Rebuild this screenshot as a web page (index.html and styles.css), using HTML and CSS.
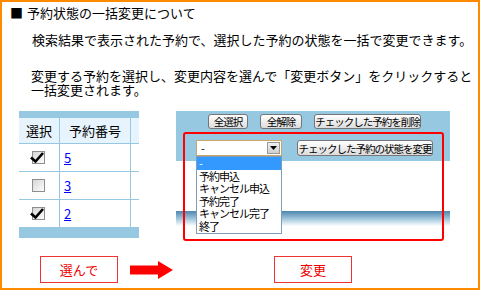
FILE: index.html
```html
<!DOCTYPE html>
<html>

<head>
    <meta charset="utf-8">
    <link rel="stylesheet" href="styles.css">
</head>

<body>
    <div class="frame">
        <h1 class="title"><span class="mark">■</span>予約状態の一括変更について</h1>
        <p class="lead">検索結果で表示された予約で、選択した予約の状態を一括で変更できます。</p>
        <p class="note">変更する予約を選択し、変更内容を選んで「変更ボタン」をクリックすると<br>一括変更されます。</p>

        <div class="demo">
            <div class="rsv-table">
                <div class="bar-top"></div>
                <div class="row head">
                    <div class="cell">選択</div>
                    <div class="cell num">予約番号</div>
                    <div class="cell"></div>
                </div>
                <div class="row">
                    <div class="cell">
                        <svg class="check" width="16" height="14" viewBox="0 0 16 14">
                            <defs>
                                <linearGradient id="cbg" x1="0" y1="0" x2="1" y2="1">
                                    <stop offset="0" stop-color="#d4d4d4"/>
                                    <stop offset="1" stop-color="#ffffff"/>
                                </linearGradient>
                            </defs>
                            <rect x="2.5" y="0.5" width="12" height="12" fill="url(#cbg)" stroke="#8e8e8e"/>
                            <path d="M1 6.5 L5.5 10.5 L13 2" fill="none" stroke="#000" stroke-width="2.6"/>
                        </svg>
                    </div>
                    <div class="cell num"><a href="#">5</a></div>
                    <div class="cell"></div>
                </div>
                <div class="row">
                    <div class="cell">
                        <svg class="check" width="16" height="14" viewBox="0 0 16 14">
                            <rect x="2.5" y="0.5" width="12" height="12" fill="url(#cbg)" stroke="#8e8e8e"/>
                        </svg>
                    </div>
                    <div class="cell num"><a href="#">3</a></div>
                    <div class="cell"></div>
                </div>
                <div class="row last">
                    <div class="cell">
                        <svg class="check" width="16" height="14" viewBox="0 0 16 14">
                            <rect x="2.5" y="0.5" width="12" height="12" fill="url(#cbg)" stroke="#8e8e8e"/>
                            <path d="M1 6.5 L5.5 10.5 L13 2" fill="none" stroke="#000" stroke-width="2.6"/>
                        </svg>
                    </div>
                    <div class="cell num"><a href="#">2</a></div>
                    <div class="cell"></div>
                </div>
                <div class="bar-bottom"></div>
            </div>

            <div class="panel">
                <div class="panel-blue">
                    <div class="btn-row">
                        <button class="btn w-all">全選択</button>
                        <button class="btn w-clear">全解除</button>
                        <button class="btn w-del">チェックした予約を削除</button>
                    </div>
                    <div class="select-row">
                        <div class="select">
                            <span class="select-value">-</span>
                            <span class="select-arrow"><svg width="7" height="4" viewBox="0 0 7 4"><path d="M0 0 H7 L3.5 4 Z" fill="#000"/></svg></span>
                            <ul class="options">
                                <li class="picked">-</li>
                                <li>予約申込</li>
                                <li>キャンセル申込</li>
                                <li>予約完了</li>
                                <li>キャンセル完了</li>
                                <li>終了</li>
                            </ul>
                        </div>
                        <button class="btn w-change">チェックした予約の状態を変更</button>
                    </div>
                </div>
                <div class="panel-white"></div>
                <div class="panel-foot"></div>
                <div class="focus-box"></div>
            </div>
        </div>

        <div class="steps">
            <div class="step">選んで</div>
            <svg class="arrow" width="43" height="18" viewBox="0 0 43 18">
                <path d="M0 4.5 H28 V0 L43 9 L28 18 V13.5 H0 Z" fill="#f00"/>
            </svg>
            <div class="step step-change">変更</div>
        </div>
    </div>
</body>

</html>
```

FILE: styles.css
```css
body {
    margin: 0;
    font-family: "Noto Sans CJK JP", "Liberation Sans", sans-serif;
    color: #000;
}

.frame {
    width: 480px;
    height: 290px;
    box-sizing: border-box;
    border: 2px solid #ff8a00;
    background: #fff;
}

.title {
    margin: 3px 0 0 8px;
    font-size: 13px;
    font-weight: normal;
    line-height: 16px;
}

.mark {
    margin-right: 4px;
}

.lead {
    margin: 11px 0 0 30px;
    font-size: 13px;
    line-height: 16px;
}

.note {
    margin: 21px 0 0 29px;
    font-size: 13px;
    line-height: 14px;
}

/* demo area */

.demo {
    display: flex;
    align-items: flex-start;
    margin-top: 14px;
    padding-left: 17px;
}

.rsv-table {
    width: 120px;
}

.bar-top {
    height: 7px;
    background: #96c8e2;
}

.bar-bottom {
    height: 11px;
    background: #96c8e2;
}

.row {
    display: grid;
    grid-template-columns: 40px 72px 8px;
    height: 28px;
    border-bottom: 1px solid #96c8e2;
    box-sizing: border-box;
}

.row.head {
    height: 26px;
    background: #e8f4fd;
}

.row.last {
    height: 27px;
    border-bottom: none;
}

.cell {
    display: flex;
    align-items: center;
    justify-content: center;
    font-size: 13px;
}

.cell.num {
    border-left: 1px solid #96c8e2;
    border-right: 1px solid #96c8e2;
}

.row .cell.num {
    justify-content: flex-start;
    padding-left: 4px;
}

.row.head .cell.num {
    justify-content: center;
    padding-left: 0;
}

.cell a {
    color: #00f;
    font-size: 13px;
}

.check {
    margin-left: -3px;
}

/* right panel */

.panel {
    position: relative;
    width: 274px;
    margin-left: 37px;
}

.panel-blue {
    height: 50px;
    box-sizing: border-box;
    padding-top: 3px;
    background: #96c8e2;
}

.btn-row {
    display: flex;
    justify-content: center;
    gap: 12px;
    padding-left: 3px;
}

.btn {
    height: 15px;
    padding: 0;
    border: 1px solid #767676;
    border-radius: 3px;
    background: linear-gradient(#ffffff, #dcdcdc);
    font-family: inherit;
    font-size: 10.5px;
    line-height: 13px;
    letter-spacing: -1px;
    white-space: nowrap;
    color: #000;
}

.w-all { width: 40px; }
.w-clear { width: 42px; }
.w-del { width: 107px; }
.w-change { width: 136px; height: 16px; }

.select-row {
    display: flex;
    align-items: center;
    gap: 15px;
    margin-top: 11px;
    padding-left: 20px;
}

.select {
    position: relative;
    display: flex;
    width: 86px;
    height: 16px;
    box-sizing: border-box;
    border: 1px solid #c8a868;
    background: #fff;
}

.select-value {
    flex: 1;
    padding-left: 4px;
    font-size: 11px;
    line-height: 14px;
}

.select-arrow {
    display: flex;
    align-items: center;
    justify-content: center;
    width: 13px;
    margin: 1px;
    border: 1px solid #9a9a9a;
    box-sizing: border-box;
    background: linear-gradient(#f0f0f0, #cfcfcf);
}

.options {
    position: absolute;
    top: 15px;
    left: -1px;
    width: 86px;
    margin: 0;
    padding: 0;
    list-style: none;
    box-sizing: border-box;
    border: 1px solid #7f9db9;
    background: #fff;
    z-index: 2;
}

.options li {
    padding-left: 2px;
    font-size: 11px;
    line-height: 12.6px;
    letter-spacing: -1px;
    white-space: nowrap;
}

.options li.picked {
    background: #3399ff;
    color: #fff;
}

.panel-white {
    height: 50px;
}

.panel-foot {
    height: 15px;
    background: linear-gradient(#4d86ad, #a6c9de 55%, #ffffff);
}

.focus-box {
    position: absolute;
    left: 7px;
    top: 21px;
    width: 261px;
    height: 109px;
    box-sizing: border-box;
    border: 2px solid #f00;
    border-radius: 3px;
    z-index: 1;
}

/* steps */

.steps {
    display: flex;
    align-items: center;
    margin-top: 18px;
    padding-left: 38px;
}

.step {
    width: 78px;
    height: 27px;
    box-sizing: border-box;
    border: 1px solid #e33;
    color: #e00;
    font-size: 13px;
    line-height: 25px;
    text-align: center;
}

.arrow {
    margin-left: 12px;
}

.step-change {
    margin-left: 101px;
}
```
